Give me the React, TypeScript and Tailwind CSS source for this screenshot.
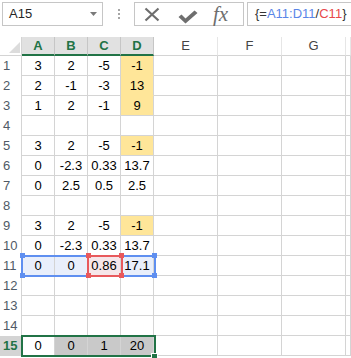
const rows: string[][] = [
  ["3", "2", "-5", "-1"],
  ["2", "-1", "-3", "13"],
  ["1", "2", "-1", "9"],
  ["", "", "", ""],
  ["3", "2", "-5", "-1"],
  ["0", "-2.3", "0.33", "13.7"],
  ["0", "2.5", "0.5", "2.5"],
  ["", "", "", ""],
  ["3", "2", "-5", "-1"],
  ["0", "-2.3", "0.33", "13.7"],
  ["0", "0", "0.86", "17.1"],
  ["", "", "", ""],
  ["", "", "", ""],
  ["", "", "", ""],
  ["0", "0", "1", "20"],
];

const yellowRows = [1, 2, 3, 5, 9];

function cellClass(r: number, c: number) {
  // r is 1-based row, c is 0-based column (A..D)
  let bg = "bg-white";
  let bottom = "border-b-[#d4d4d4]";
  if (c === 3 && yellowRows.includes(r)) {
    bg = "bg-[#ffe699]";
    if (yellowRows.includes(r + 1)) bottom = "border-b-[#ffe699]";
  }
  if (r === 11) bg = c === 2 ? "bg-[#f6e6e9]" : "bg-[#e9effb]";
  if (r === 15 && c > 0) bg = "bg-[#c9c9c9]";
  return `${bg} ${bottom}`;
}

function Handle({ color, x, y }: { color: string; x: string; y: string }) {
  return <div className={`absolute h-[5px] w-[5px] ${color} ${x} ${y}`} />;
}

export default function App() {
  return (
    <div className="h-[358px] w-[351px] overflow-hidden bg-white font-['Liberation_Sans',Arial,sans-serif] text-[13px] text-black">
      {/* formula bar */}
      <div className="flex h-[26px] pt-[2px]">
        <div className="ml-[2px] flex w-[101px] items-center justify-between border border-[#c6c6c6] pl-[6px] pr-[5px] text-[#262626]">
          <span>A15</span>
          <svg width="7" height="4" viewBox="0 0 7 4">
            <polygon points="0,0 7,0 3.5,4" fill="#7a7a7a" />
          </svg>
        </div>
        <div className="flex w-[31px] flex-col items-center justify-center gap-[2px]">
          <span className="h-[2px] w-[2px] bg-[#a6a6a6]" />
          <span className="h-[2px] w-[2px] bg-[#a6a6a6]" />
          <span className="h-[2px] w-[2px] bg-[#a6a6a6]" />
        </div>
        <div className="flex w-[110px] items-center border border-[#c6c6c6] pl-[9px]">
          <svg width="16" height="15" viewBox="0 0 16 15">
            <path d="M1.5 1.5 L14.5 13.5 M14.5 1.5 L1.5 13.5" stroke="#6e6e6e" strokeWidth="2.2" fill="none" />
          </svg>
          <svg className="ml-[18px] mt-[5px]" width="20" height="14" viewBox="0 0 20 14">
            <path d="M0.5 7 L3.5 4.5 L7.5 8.5 L16.5 0.5 L19.5 3 L7.5 13.5 Z" fill="#6e6e6e" />
          </svg>
          <span className="ml-[15px] font-['Liberation_Serif',serif] text-[21px] italic leading-none text-[#6e6e6e]">
            fx
          </span>
        </div>
        <div className="ml-[3px] flex flex-1 items-center border border-r-0 border-[#c6c6c6] pl-[7px]">
          <span className="text-[#333]">{"{="}</span>
          <span className="text-[#5a86e8]">A11:D11</span>
          <span className="text-[#333]">/</span>
          <span className="text-[#e8494b]">C11</span>
          <span className="text-[#333]">{"}"}</span>
        </div>
      </div>

      <div className="h-[11px]" />

      {/* sheet */}
      <div className="relative">
        <div className="grid grid-cols-[22px_33px_33px_33px_33px_64px_64px_64px_1fr]">
          {/* column headers */}
          <div className="relative h-[19px] border-b border-r border-[#d4d4d4]">
            <svg className="absolute left-0 top-0" width="22" height="19" viewBox="0 0 22 19">
              <polygon points="20,5 20,16 9,16" fill="#dcdcdc" />
            </svg>
          </div>
          {["A", "B", "C", "D"].map((l) => (
            <div
              key={l}
              className="flex h-[19px] items-center justify-center border-b-2 border-r border-b-[#217346] border-r-[#c6c6c6] bg-[#e1e1e1] font-bold text-[#217346]"
            >
              {l}
            </div>
          ))}
          {["E", "F", "G", ""].map((l, i) => (
            <div
              key={i}
              className="flex h-[19px] items-center justify-center border-b border-r border-b-[#d4d4d4] border-r-[#e6e6e6] text-[#444]"
            >
              {l}
            </div>
          ))}

          {rows.map((vals, i) => {
            const r = i + 1;
            return [
              <div
                key={`h${r}`}
                className={`flex h-[20px] items-center border-r border-[#d4d4d4] pl-[3px] ${
                  r === 15 ? "bg-[#d4d4d4] font-bold text-[#217346]" : "text-[#505a66]"
                }`}
              >
                {r}
              </div>,
              ...vals.map((v, c) => (
                <div
                  key={`c${r}-${c}`}
                  className={`flex h-[20px] items-center justify-center border-b border-r border-r-[#d4d4d4] ${cellClass(r, c)}`}
                >
                  {v}
                </div>
              )),
              ...[0, 1, 2, 3].map((k) => (
                <div key={`e${r}-${k}`} className="h-[20px] border-b border-r border-[#d4d4d4]" />
              )),
            ];
          })}
        </div>

        {/* formula reference ranges */}
        <div className="absolute left-[21px] top-[218px] h-[22px] w-[135px] border-2 border-[#5f8ff0]" />
        <div className="absolute left-[87px] top-[218px] h-[22px] w-[36px] border-2 border-[#e8595c]" />
        <Handle color="bg-[#5f8ff0]" x="left-[20px]" y="top-[216px]" />
        <Handle color="bg-[#5f8ff0]" x="left-[152px]" y="top-[216px]" />
        <Handle color="bg-[#5f8ff0]" x="left-[20px]" y="top-[236px]" />
        <Handle color="bg-[#5f8ff0]" x="left-[152px]" y="top-[236px]" />
        <Handle color="bg-[#e8595c]" x="left-[86px]" y="top-[216px]" />
        <Handle color="bg-[#e8595c]" x="left-[119px]" y="top-[216px]" />
        <Handle color="bg-[#e8595c]" x="left-[86px]" y="top-[236px]" />
        <Handle color="bg-[#e8595c]" x="left-[119px]" y="top-[236px]" />

        {/* selection A15:D15 */}
        <div className="absolute left-[21px] top-[298px] h-[22px] w-[135px] border-2 border-[#217346]" />
        <div className="absolute left-[151px] top-[316px] h-[7px] w-[7px] border border-white bg-[#217346]" />
      </div>
    </div>
  );
}
